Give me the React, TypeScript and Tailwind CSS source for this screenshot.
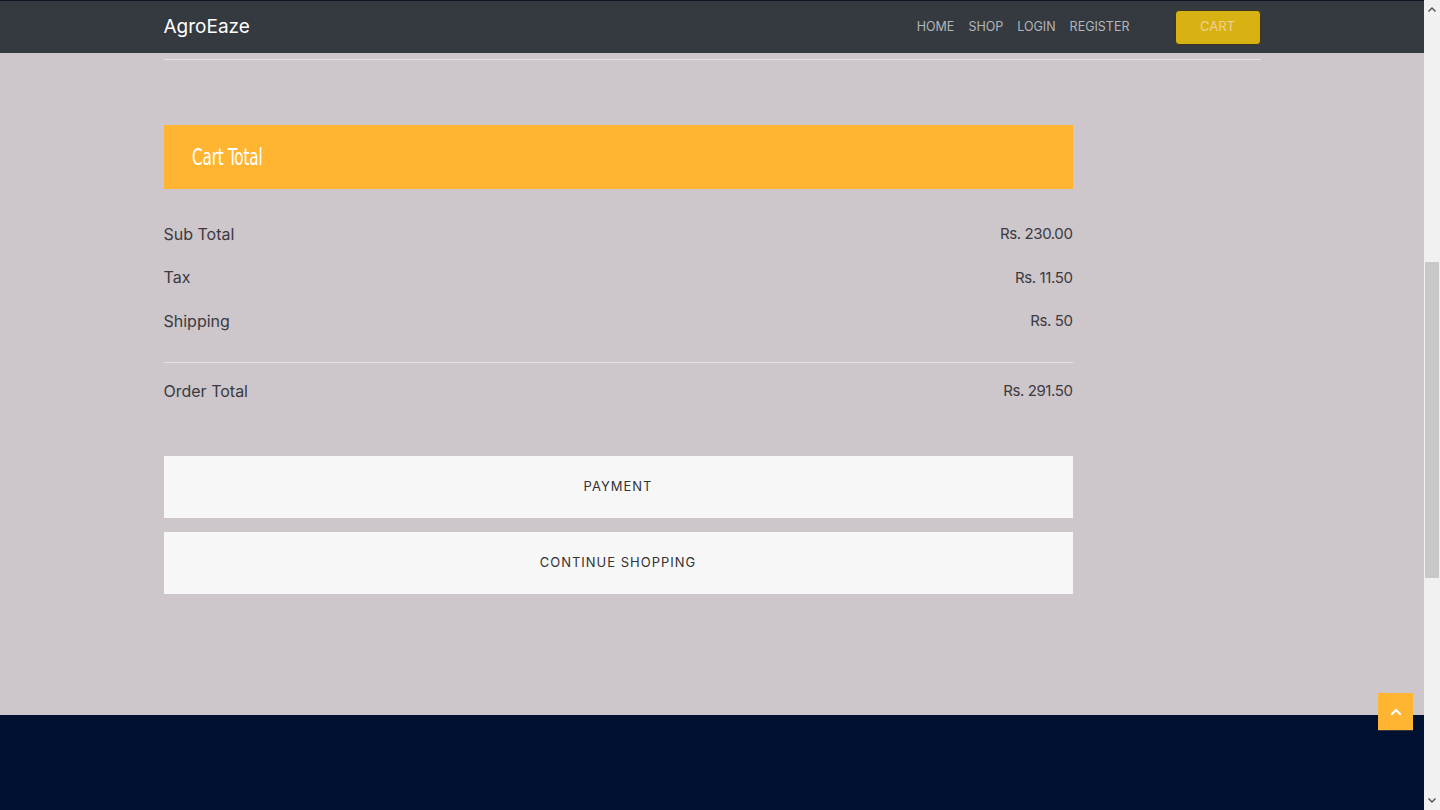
import { ChevronUp } from "lucide-react";

const rows = [
  { label: "Sub Total", value: "Rs. 230.00" },
  { label: "Tax", value: "Rs. 11.50" },
  { label: "Shipping", value: "Rs. 50" },
];

const navLinks = ["HOME", "SHOP", "LOGIN", "REGISTER"];

const bodyFont = "font-['Inter','Noto_Sans',sans-serif]";

function Navbar() {
  return (
    <nav className="h-[53px] shrink-0 border-t border-[#0d1422] bg-[#343a40]">
      <div className="mx-auto flex h-full w-[1097px] items-center">
        <span className="text-[19px] text-white">AgroEaze</span>
        <div className="ml-auto flex items-center gap-[14px] text-[12.5px] text-[#b3b5b8]">
          {navLinks.map((link) => (
            <span key={link}>{link}</span>
          ))}
        </div>
        <button
          type="button"
          className="ml-[45px] flex h-[35px] w-[86px] items-center justify-center rounded-[4px] border border-[#3a3620] bg-[#d7b212] text-[13px] text-[#f1cf98]"
        >
          CART
        </button>
      </div>
    </nav>
  );
}

function CartTotal() {
  return (
    <div className="mx-auto w-[1097px]">
      <div className="mt-[6px] h-px bg-[#e6e2e4]" />
      <div className="mt-[65px] w-[909px]">
        <div className="flex h-[64px] items-center bg-[#ffb531] pl-[28px]">
          <h3 className="inline-block origin-left scale-x-[0.74] font-['DejaVu_Sans_Condensed','DejaVu_Sans',sans-serif] text-[23px] tracking-[-0.3px] text-white font-stretch-condensed">
            Cart Total
          </h3>
        </div>

        <div className="mt-[23px] text-[16px] text-[#3a3a40]">
          {rows.map((row) => (
            <div key={row.label} className="flex h-[43.5px] items-center justify-between">
              <span>{row.label}</span>
              <span className="pt-px text-[15px] tracking-[-0.4px]">{row.value}</span>
            </div>
          ))}
          <div className="mt-[19px] h-px bg-[#e6e2e4]" />
          <div className="flex h-[41px] items-end justify-between pb-px leading-[24px]">
            <span>Order Total</span>
            <span className="text-[15px] tracking-[-0.4px]">Rs. 291.50</span>
          </div>
        </div>

        <div className="mt-[52px] flex flex-col gap-[14px] text-[13px] tracking-[1px] text-[#333]">
          <button type="button" className="h-[62px] w-full bg-[#f7f7f7] pt-px">
            PAYMENT
          </button>
          <button type="button" className="h-[62px] w-full bg-[#f7f7f7] pt-px">
            CONTINUE SHOPPING
          </button>
        </div>
      </div>
    </div>
  );
}

function FakeScrollbar() {
  return (
    <div className="relative flex h-full w-[16px] shrink-0 flex-col items-center bg-[#f1f1f1]">
      <svg className="mt-[7px]" width="8" height="5" viewBox="0 0 8 5" aria-hidden>
        <path d="M0.5 4.5 L4 1 L7.5 4.5" fill="none" stroke="#505050" strokeWidth="1.4" />
      </svg>
      <div className="absolute top-[262px] left-[1px] h-[316px] w-[14px] bg-[#c9c9c9]" />
      <svg className="mt-auto mb-[7px]" width="8" height="5" viewBox="0 0 8 5" aria-hidden>
        <path d="M0.5 0.5 L4 4 L7.5 0.5" fill="none" stroke="#505050" strokeWidth="1.4" />
      </svg>
    </div>
  );
}

export default function App() {
  return (
    <div className={`flex h-[810px] w-[1440px] overflow-hidden ${bodyFont}`}>
      <div className="relative flex w-[1424px] flex-col bg-[#cdc6cb]">
        <Navbar />
        <main className="h-[662px] shrink-0">
          <CartTotal />
        </main>
        <footer className="flex-1 bg-[#001030]" />
        <button
          type="button"
          className="absolute top-[693px] left-[1378px] flex h-[37px] w-[35px] items-center justify-center bg-[#ffb531] shadow-[0_1px_0_#3a3a3a]"
        >
          <ChevronUp size={16} strokeWidth={3.5} color="white" />
        </button>
      </div>
      <FakeScrollbar />
    </div>
  );
}
